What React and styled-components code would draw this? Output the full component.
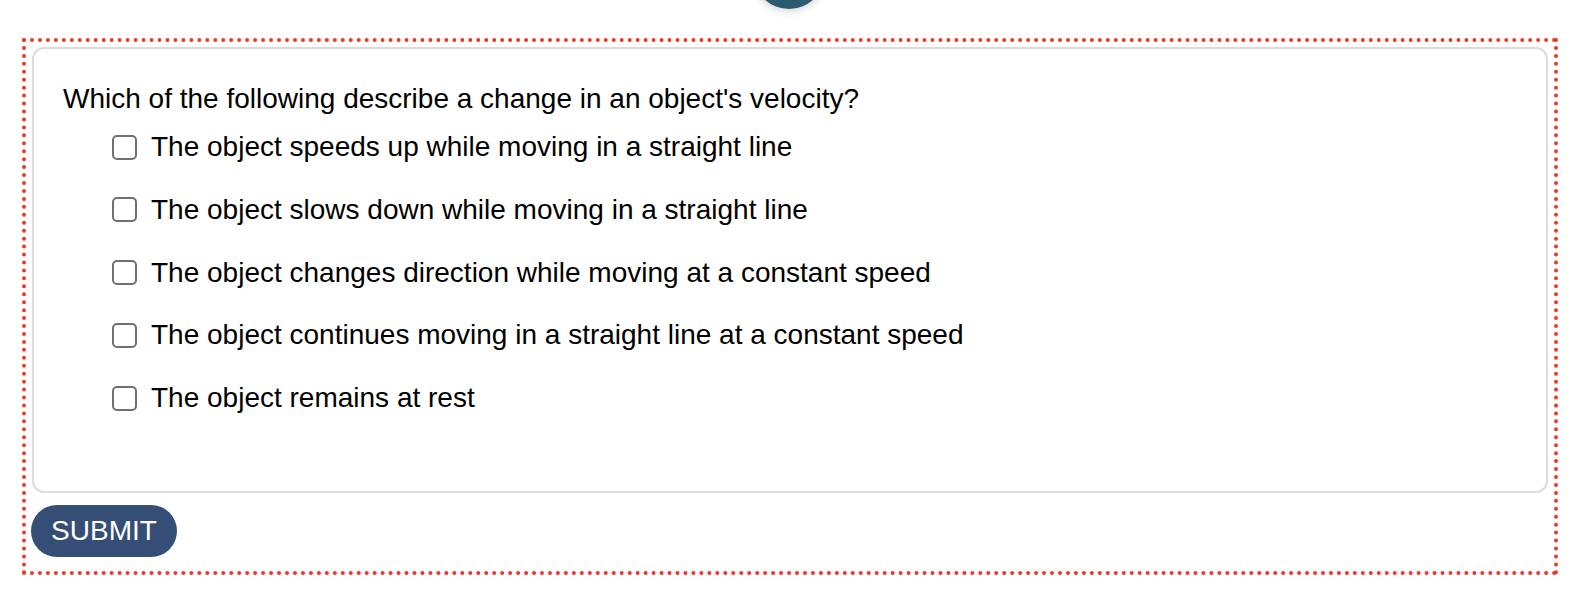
import React from "react";
import styled, { createGlobalStyle } from "styled-components";

const GlobalStyle = createGlobalStyle`
  body {
    margin: 0;
    background: #fff;
    font-family: "Liberation Sans", Arial, Helvetica, sans-serif;
    color: #000;
    overflow: hidden;
  }
`;

const Page = styled.div`
  position: relative;
  width: 1584px;
  height: 594px;
  padding: 38px 0 0 22px;
  box-sizing: border-box;
`;

const Avatar = styled.div`
  position: absolute;
  left: 753px;
  top: -63px;
  width: 72px;
  height: 72px;
  border-radius: 50%;
  background: #2b5a73;
  box-shadow: 0 2px 8px rgba(0, 0, 0, 0.18);
`;

const Frame = styled.div`
  width: 1536px;
  box-sizing: border-box;
  border: 4px dotted #f3362b;
  padding: 5px 6px 14px 6px;
`;

const Card = styled.div`
  height: 446px;
  box-sizing: border-box;
  border: 2px solid #dcdcdc;
  border-radius: 12px;
  padding: 34px 29px 0;
`;

const Question = styled.div`
  font-size: 28px;
  line-height: 32px;
`;

const Options = styled.div`
  display: flex;
  flex-direction: column;
  gap: 30.8px;
  margin-top: 16px;
  padding-left: 49px;
`;

const Option = styled.label`
  display: flex;
  align-items: center;
  height: 32px;
  font-size: 28px;
  cursor: pointer;
`;

const Box = styled.input.attrs({ type: "checkbox" })`
  appearance: none;
  margin: 0 14px 0 0;
  width: 25px;
  height: 25px;
  box-sizing: border-box;
  border: 2px solid #707070;
  border-radius: 5px;
  background: #fff;
`;

const SubmitButton = styled.button`
  margin-top: 12px;
  margin-left: -1px;
  width: 146px;
  height: 52px;
  border: none;
  border-radius: 26px;
  background: #354e75;
  color: #fff;
  font-family: "Liberation Sans", Arial, sans-serif;
  font-size: 28px;
  padding: 0;
  cursor: pointer;
  display: block;
`;

const options = [
  "The object speeds up while moving in a straight line",
  "The object slows down while moving in a straight line",
  "The object changes direction while moving at a constant speed",
  "The object continues moving in a straight line at a constant speed",
  "The object remains at rest",
];

export default function App() {
  return (
    <Page>
      <GlobalStyle />
      <Avatar />
      <Frame>
        <Card>
          <Question>
            Which of the following describe a change in an object's velocity?
          </Question>
          <Options>
            {options.map((text) => (
              <Option key={text}>
                <Box />
                {text}
              </Option>
            ))}
          </Options>
        </Card>
        <SubmitButton type="submit">SUBMIT</SubmitButton>
      </Frame>
    </Page>
  );
}
